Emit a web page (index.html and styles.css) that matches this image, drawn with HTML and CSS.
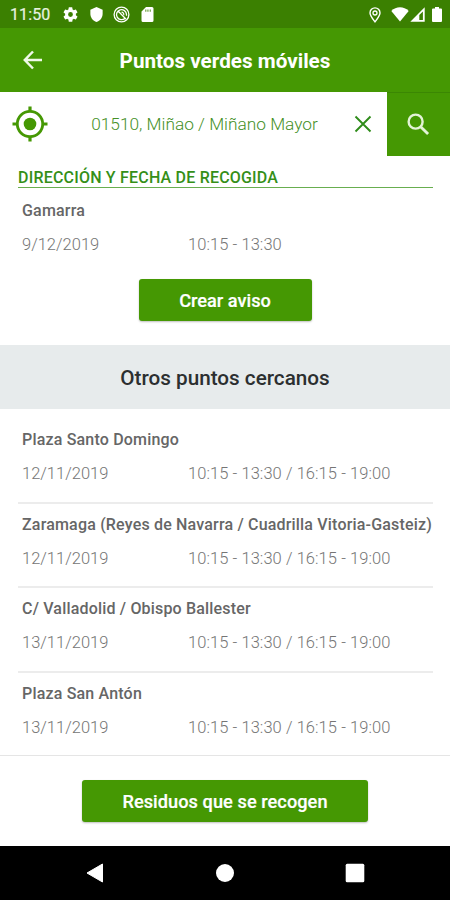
FILE: index.html
```
<!DOCTYPE html>
<html lang="es">
<head>
<meta charset="utf-8">
<title>Puntos verdes móviles</title>
<link rel="stylesheet" href="styles.css">
</head>
<body>
<div class="status">
  <span class="clock">11:50</span>
  <svg class="st-gear" viewBox="2 2 20 20"><path fill="#fff" fill-rule="evenodd" d="M19.14 12.94c.04-.3.06-.61.06-.94s-.02-.64-.07-.94l2.03-1.58a.49.49 0 0 0 .12-.61l-1.92-3.32a.49.49 0 0 0-.59-.22l-2.39.96a7 7 0 0 0-1.62-.94l-.36-2.54a.48.48 0 0 0-.48-.41h-3.84a.48.48 0 0 0-.47.41l-.36 2.54c-.59.24-1.13.57-1.62.94l-2.39-.96a.49.49 0 0 0-.59.22L2.74 8.87a.48.48 0 0 0 .12.61l2.03 1.58a6 6 0 0 0 0 1.88l-2.03 1.58a.49.49 0 0 0-.12.61l1.92 3.32c.12.22.37.29.59.22l2.39-.96c.5.38 1.03.7 1.62.94l.36 2.54c.05.24.24.41.48.41h3.84c.24 0 .44-.17.47-.41l.36-2.54c.59-.24 1.13-.56 1.62-.94l2.39.96c.22.08.47 0 .59-.22l1.92-3.32a.48.48 0 0 0-.12-.61zM12 15.2a3.2 3.2 0 1 1 0-6.4 3.2 3.2 0 0 1 0 6.4z"/></svg>
  <svg class="st-shield" viewBox="3 1 18 22"><path fill="#fff" d="M12 1 3 5v6c0 5.55 3.84 10.74 9 12 5.16-1.26 9-6.45 9-12V5z"/></svg>
  <svg class="st-at" viewBox="0 0 17 17" fill="none" stroke="#fff"><circle cx="8.5" cy="8.5" r="7.4" stroke-width="1.3"/><path stroke-width="1.3" d="M12 12.2A5 5 0 1 1 13.5 8.5v1.2M4.8 4.8l8.1 8.2"/><path stroke-width="1.2" d="M10.7 9.3A2.4 2.4 0 0 0 8.5 6.200"/></svg>
  <svg class="st-sd" viewBox="4 2 16 20"><path fill="#fff" fill-rule="evenodd" d="M18 2h-8L4 8v12a2 2 0 0 0 2 2h12a2 2 0 0 0 2-2V4a2 2 0 0 0-2-2zM9.2 5.2h1.2v3H9.2zM12 5.2h1.2v3H12zM15 5.2h1.2v3H15z"/></svg>
  <span class="spacer"></span>
  <svg class="st-pin" viewBox="0 0 12 16" fill="none" stroke="#fff"><path stroke-width="1.4" d="M6 14.8C3.2 11.200 1 8.500 1 5.900a5 5 0 0 1 10 0c0 2.600-2.200 5.300-5 8.900z"/><circle cx="6" cy="6" r="2" stroke-width="1.3"/></svg>
  <svg class="st-wifi" viewBox="0 0 18 15"><path fill="#fff" d="M9 14.600.3 3.900C2.800 1.500 5.700.3 9 .3s6.200 1.200 8.700 3.600z"/></svg>
  <svg class="st-cell" viewBox="0 0 15 15"><path fill="#fff" fill-rule="evenodd" d="M.3 14.700 14.700.3v14.400zM9.300 8v5h3.600V4.400z"/></svg>
  <svg class="st-batt" viewBox="0 0 10 15"><path fill="#fff" d="M3 0h4v1.600h2a1 1 0 0 1 1 1V14a1 1 0 0 1-1 1H1a1 1 0 0 1-1-1V2.600a1 1 0 0 1 1-1h2z"/></svg>
</div>
<header class="appbar">
  <svg class="back" viewBox="0 0 20 20" fill="none" stroke="#eff9e8" stroke-width="2.500"><path d="M19 10H2M10 1.500 1.800 10l8.200 8.500"/></svg>
  <h1>Puntos verdes móviles</h1>
</header>
<div class="search">
  <svg class="locate" viewBox="0 0 36 36" fill="none" stroke="#459803"><circle cx="18" cy="18" r="12.700" stroke-width="2.800"/><circle cx="18" cy="18" r="6.300" fill="#459803" stroke="none"/><path stroke-width="3.200" d="M18 .5V5M18 31v4.500M.5 18H5M31 18h4.500"/></svg>
  <span class="query">01510, Miñao / Miñano Mayor</span>
  <svg class="clear" viewBox="0 0 18 18" fill="none" stroke="#2f8c1a" stroke-width="1.900"><path d="m1.500 1.500 15 15m0-15-15 15"/></svg>
  <button class="go"><svg viewBox="0 0 24 24" fill="none" stroke="#e3f3d7"><circle cx="9" cy="9" r="7.300" stroke-width="2.500"/><path stroke-width="3" d="m14.500 14.500 7.500 7.500"/></svg></button>
</div>
<main>
  <h2 class="heading">DIRECCIÓN Y FECHA DE RECOGIDA</h2>
  <section class="point main-point">
    <h3>Gamarra</h3>
    <p><span class="date">9/12/2019</span><span class="hours">10:15 - 13:30</span></p>
  </section>
  <div class="action"><button class="btn create">Crear aviso</button></div>
  <h2 class="nearby">Otros puntos cercanos</h2>
  <section class="list">
    <article class="point"><h3>Plaza Santo Domingo</h3><p><span class="date">12/11/2019</span><span class="hours">10:15 - 13:30 / 16:15 - 19:00</span></p></article>
    <article class="point"><h3>Zaramaga (Reyes de Navarra / Cuadrilla Vitoria-Gasteiz)</h3><p><span class="date">12/11/2019</span><span class="hours">10:15 - 13:30 / 16:15 - 19:00</span></p></article>
    <article class="point"><h3>C/ Valladolid / Obispo Ballester</h3><p><span class="date">13/11/2019</span><span class="hours">10:15 - 13:30 / 16:15 - 19:00</span></p></article>
    <article class="point"><h3>Plaza San Antón</h3><p><span class="date">13/11/2019</span><span class="hours">10:15 - 13:30 / 16:15 - 19:00</span></p></article>
  </section>
</main>
<footer class="bottom"><button class="btn waste">Residuos que se recogen</button></footer>
<nav class="nav">
  <svg viewBox="0 0 20 20"><path fill="#fff" stroke="#fff" stroke-linejoin="round" d="M17.500 1v18L2 10z"/></svg>
  <svg viewBox="0 0 20 20"><circle cx="10" cy="10" r="9" fill="#fff"/></svg>
  <svg viewBox="0 0 20 20"><rect x=".7" y=".7" width="18.600" height="18.600" rx="1.500" fill="#fff"/></svg>
</nav>
</body>
</html>
```
FILE: styles.css
```
* { box-sizing: border-box; }
body {
  margin: 0;
  width: 450px;
  height: 900px;
  display: flex;
  flex-direction: column;
  overflow: hidden;
  background: #fff;
  font-family: Roboto, sans-serif;
}
h1, h2, h3, p { margin: 0; white-space: nowrap; }
svg { display: block; flex: none; }
button { border: 0; padding: 0; font-family: inherit; }
main, .bottom, .search, .appbar, .status, .nav { flex: none; }

.status {
  height: 28px;
  padding: 1px 8px 0 10px;
  display: flex;
  align-items: center;
  background: #3b8001;
}
.clock { width: 53px; color: #e8f3e0; font-size: 16px; letter-spacing: 0.1px; -webkit-text-stroke: 0.2px #e8f3e0; }
.spacer { flex: 1; }
.st-gear { width: 15px; height: 15px; margin-right: 12px; }
.st-shield { width: 13px; height: 15px; margin-right: 10px; }
.st-at { width: 17px; height: 17px; margin-right: 11px; }
.st-sd { width: 13px; height: 15px; }
.st-pin { width: 12px; height: 16px; margin-right: 10px; }
.st-wifi { width: 18px; height: 15px; }
.st-cell { width: 15px; height: 15px; margin: 0 7px 0 1px; }
.st-batt { width: 10px; height: 15px; }

.appbar {
  height: 64px;
  display: grid;
  grid-template-columns: 54px 1fr 54px;
  align-items: center;
  background: #459803;
}
.back { width: 20px; height: 20px; margin-left: 23px; }
.appbar h1 { color: #fff; font-size: 20.700px; font-weight: 700; text-align: center; line-height: 24px; padding-top: 2px; }

.search { height: 64px; display: flex; align-items: center; }
.locate { width: 36px; height: 36px; margin-left: 12px; }
.query { flex: 1; padding-left: 7px; text-align: center; color: #459027; font-size: 17.300px; font-weight: 300; white-space: nowrap; }
.clear { width: 18px; height: 18px; margin: 0 15px 0 0; }
.go {
  width: 63px;
  height: 64px;
  display: flex;
  align-items: center;
  justify-content: center;
  background: #459803;
  border-top: 1px solid #3b8703;
}
.go svg { width: 23px; height: 23px; }

main { height: 600px; padding-top: 11px; border-bottom: 1px solid #e5e5e5; }
.heading {
  height: 21px;
  margin: 0 17px 0 18px;
  border-bottom: 1px solid #68ae4f;
  color: #358f18;
  font-size: 16px;
  font-weight: 500;
  line-height: 21px;
  letter-spacing: 0.2px;
}
.point { height: 84.600px; margin: 0 17px 0 18px; padding: 12px 4px 0; }
.point h3 { height: 20px; color: #666; font-size: 16px; font-weight: 500; line-height: 20px; letter-spacing: 0.180px; }
.point p { display: grid; grid-template-columns: 166px 1fr; margin-top: 14px; line-height: 20px; color: #757575; font-size: 16.500px; font-weight: 300; }
.hours { letter-spacing: 0.070px; }
.point + .point { border-top: 2px solid #ececec; padding-top: 11px; }
.main-point { height: 91px; padding-top: 12.500px; }
.action { height: 66px; }
.btn {
  display: block;
  height: 42px;
  margin: 0 auto;
  border-radius: 3px;
  background: #459803;
  color: #fff;
  font-size: 18.200px;
  font-weight: 500;
  line-height: 43px;
  box-shadow: 0 1px 2px rgba(0, 0, 0, .25);
  -webkit-text-stroke: 0.200px #fff;
}
.create { width: 173px; }
.waste { width: 286px; letter-spacing: 0.050px; }
.nearby {
  height: 64px;
  background: #e7ebec;
  color: #2c2f30;
  font-size: 20.700px;
  font-weight: 500;
  line-height: 66px;
  text-align: center;
}
.list { padding-top: 8px; }
.list .point:first-child { padding-top: 13px; }
.bottom { height: 90px; padding-top: 24px; }
.nav {
  height: 54px;
  padding: 0 85px;
  display: flex;
  align-items: center;
  justify-content: space-between;
  background: #000;
}
.nav svg { width: 20px; height: 20px; }
```
